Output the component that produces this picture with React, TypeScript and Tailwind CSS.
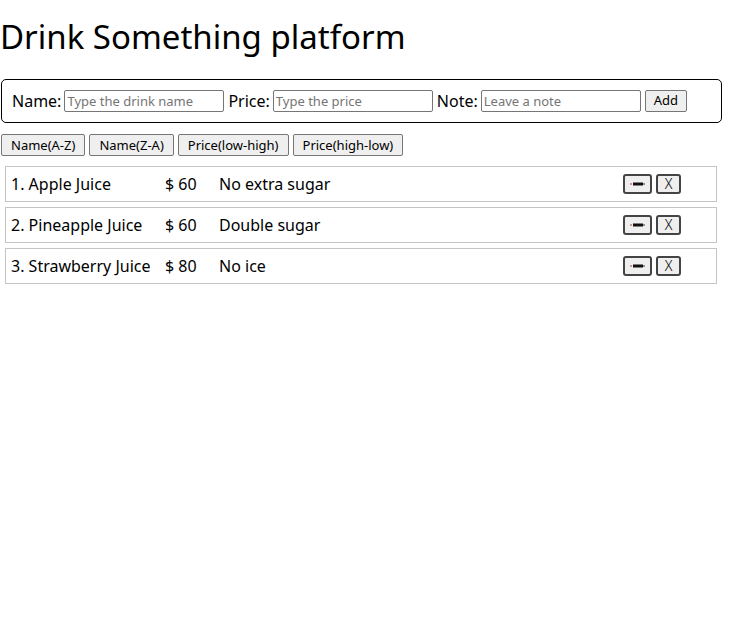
import React from "react";

const font = { fontFamily: '"Noto Sans", "Open Sans", sans-serif' };

const drinks = [
  { name: "Apple Juice", price: 60, note: "No extra sugar" },
  { name: "Pineapple Juice", price: 60, note: "Double sugar" },
  { name: "Strawberry Juice", price: 80, note: "No ice" },
];

function Pencil() {
  return (
    <svg width="16" height="6" viewBox="0 0 16 6">
      <rect x="0" y="2.5" width="2" height="1" fill="#c0392b" />
      <rect x="3" y="1.5" width="10" height="3" fill="#111" />
      <rect x="13" y="2.5" width="2" height="1" fill="#333" />
    </svg>
  );
}

export default function App() {
  return (
    <div className="w-[750px] h-[629px] bg-white text-black" style={font}>
      <h1 className="text-[33px] leading-[40px] pt-[17px] mb-[22px]">Drink Something platform</h1>
      <div className="ml-[1px] w-[721px] h-[44px] border border-black rounded-[5px] flex items-center pl-[10px] text-[16px]">
        <span>Name:</span>
        <input
          className="ml-[3px] w-[160px] h-[22px] border border-[#767676] rounded-[2px] px-[2px] text-[13px] placeholder:text-[#757575]"
          placeholder="Type the drink name"
        />
        <span className="ml-[4px]">Price:</span>
        <input
          className="ml-[3px] w-[160px] h-[22px] border border-[#767676] rounded-[2px] px-[2px] text-[13px] placeholder:text-[#757575]"
          placeholder="Type the price"
        />
        <span className="ml-[4px]">Note:</span>
        <input
          className="ml-[3px] w-[160px] h-[22px] border border-[#767676] rounded-[2px] px-[2px] text-[13px] placeholder:text-[#757575]"
          placeholder="Leave a note"
        />
        <button className="ml-[4px] h-[22px] px-[8px] border border-[#767676] rounded-[2px] bg-[#efefef] text-[13px]">
          Add
        </button>
      </div>
      <div className="mt-[11px] ml-[1px] flex gap-[4px] text-[13px]">
        {["Name(A-Z)", "Name(Z-A)", "Price(low-high)", "Price(high-low)"].map((t) => (
          <button
            key={t}
            className="h-[22px] px-[9px] border border-[#767676] rounded-[2px] bg-[#efefef] leading-none"
          >
            {t}
          </button>
        ))}
      </div>
      <div className="mt-[10px] ml-[5px] w-[712px] flex flex-col gap-[5px]">
        {drinks.map((d, i) => (
          <div key={i} className="h-[36px] border border-[#c4c4c4] flex items-center pl-[5px] text-[16px]">
            <span className="w-[154px]">{i + 1}. {d.name}</span>
            <span className="w-[54px]">$ {d.price}</span>
            <span className="flex-1">{d.note}</span>
            <div className="flex gap-[4px] mr-[35px]">
              <button className="w-[29px] h-[20px] border-2 border-[#444] rounded-[3px] bg-[#efefef] flex items-center justify-center">
                <Pencil />
              </button>
              <button className="w-[25px] h-[20px] border-2 border-[#444] rounded-[3px] bg-[#efefef] flex items-center justify-center text-[14px] font-light leading-none">
                X
              </button>
            </div>
          </div>
        ))}
      </div>
    </div>
  );
}
